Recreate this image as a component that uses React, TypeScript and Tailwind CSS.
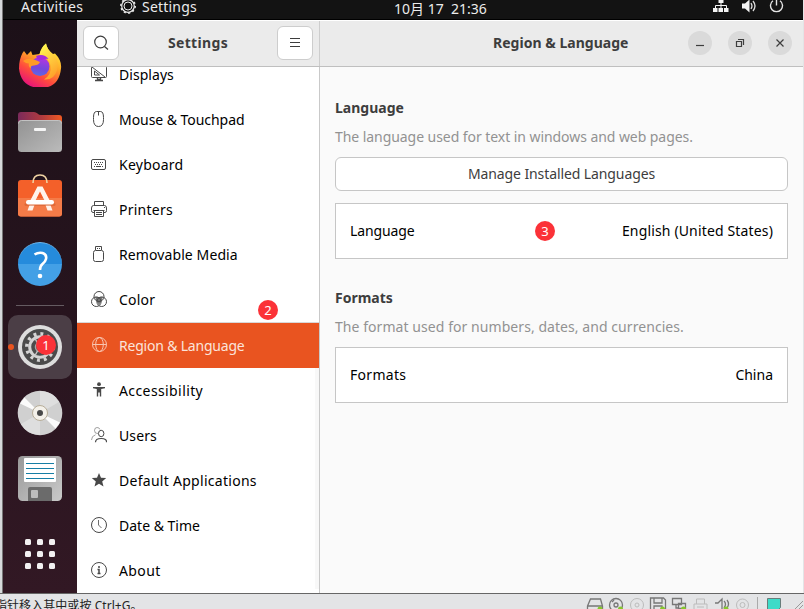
import React from 'react';

const line = { fill: 'none', stroke: 'currentColor', strokeWidth: 1 } as const;

function Icon({ children, size = 16, className = '' }: { children: React.ReactNode; size?: number; className?: string }) {
  return (
    <svg width={size} height={size} viewBox={`0 0 ${size} ${size}`} className={`shrink-0 ${className}`}>
      {children}
    </svg>
  );
}

const icons: Record<string, React.ReactNode> = {
  displays: (
    <g {...line}>
      <path d="M1.500.500h13q1 0 1 1v9q0 1-1 1h-13q-1 0-1-1v-9q0-1 1-1ZM1 1l13 10M3.500 5v4h5Z" />
      <path d="M6.500 12v1.500h3V12M4 14.500h8" strokeWidth="1.400" />
    </g>
  ),
  mouse: (
    <g {...line}>
      <path d="M5.500.500h4q3 0 3 6v2q0 7-5 7t-5-7v-2q0-6 3-6ZM7.500.500v4" />
    </g>
  ),
  keyboard: (
    <g {...line}>
      <rect x=".5" y="3.500" width="14" height="10" rx="1.500" />
      <path d="M3 6.500h10M4 8.500h8" strokeDasharray="1 1" />
      <path d="M3 10.500h1M5 10.500h5M11 10.500h1" />
    </g>
  ),
  printer: (
    <g {...line}>
      <path d="M3.500 4V.500h9V4M3 11.500H2q-1.500 0-1.500-2V7q0-2.500 2-2.500h11q2 0 2 2.500v2.500q0 2-1.500 2h-1M3.500 9v6.500h9V9M2.500 9.500h11M5 11.500h6M5 13.500h6M13 6.500h1" />
    </g>
  ),
  usb: (
    <g {...line}>
      <path d="M4.500 4V.500h6V4M6 2.500h1M8 2.500h1" />
      <rect x="2.500" y="4.500" width="10" height="11" rx="2" />
    </g>
  ),
  color: (
    <g {...line}>
      <path d="M4 6h8l-1.500 4L8 14 5.500 10Z" fill="currentColor" stroke="none" opacity=".75" />
      <circle cx="8" cy="5.500" r="5" />
      <circle cx="5.300" cy="10.700" r="4.800" />
      <circle cx="10.700" cy="10.700" r="4.800" />
    </g>
  ),
  globe: (
    <g {...line}>
      <circle cx="8.500" cy="7.500" r="7" />
      <ellipse cx="8.500" cy="7.500" rx="3.800" ry="7" />
      <path d="M1.500 7.500h14" />
    </g>
  ),
  access: (
    <g fill="currentColor">
      <circle cx="8" cy="2.200" r="1.900" />
      <path d="M2 5h12v1.200l-3.800.700v7.600H8.800v-4H7.200v4H5.800V6.900L2 6.200Z" />
    </g>
  ),
  users: (
    <g {...line}>
      <g opacity=".5">
        <path d="M7 6.500Q3.500 7 3.500 3.500 3.500.500 6 .500q2.500 0 3 2M.500 13q0-4 4-5.200" />
      </g>
      <ellipse cx="10.200" cy="6.500" rx="2.700" ry="3.200" />
      <path d="M4.500 15.200q0-3.700 5.700-3.700t5.300 3.700" strokeWidth="1.200" />
    </g>
  ),
  star: <path fill="currentColor" d="m8 1 2 4.800 5.200.3-4 3.300L12.500 14.500 8 11.700l-4.500 2.800 1.300-5.100-4-3.300L6 5.800Z" />,
  clock: (
    <g {...line}>
      <circle cx="8" cy="8" r="7.500" />
      <path d="M7.500 3v5l3 3" opacity=".8" />
    </g>
  ),
  about: (
    <g {...line}>
      <circle cx="8" cy="8" r="7.500" />
      <path d="M8 4v2M6.500 7.500H8V11M6.500 11.500h3" strokeWidth="1.500" />
    </g>
  ),
};

type Row = { icon: string; label: string; track: string };

const topRows: Row[] = [
  { icon: 'displays', label: 'Displays', track: 'tracking-[0.05px]' },
  { icon: 'mouse', label: 'Mouse & Touchpad', track: 'tracking-[-0.05px]' },
  { icon: 'keyboard', label: 'Keyboard', track: 'tracking-[0.25px]' },
  { icon: 'printer', label: 'Printers', track: 'tracking-[0.25px]' },
  { icon: 'usb', label: 'Removable Media', track: 'tracking-[0.1px]' },
  { icon: 'color', label: 'Color', track: 'tracking-[0.2px]' },
];

const bottomRows: Row[] = [
  { icon: 'access', label: 'Accessibility', track: 'tracking-[0.4px]' },
  { icon: 'users', label: 'Users', track: 'tracking-[0.1px]' },
  { icon: 'star', label: 'Default Applications', track: 'tracking-[0.28px]' },
  { icon: 'clock', label: 'Date & Time', track: 'tracking-[0px]' },
  { icon: 'about', label: 'About', track: 'tracking-[0.4px]' },
];

function SideRow({ row, active = false }: { row: Row; active?: boolean }) {
  return (
    <div className={`flex h-[45px] shrink-0 items-center pl-3.5 ${active ? 'bg-[#e95420] text-[#fbe3da]' : 'text-black'}`}>
      <Icon className={`mr-3 -mt-px ${active ? 'text-[#f8c4b0]' : 'text-[#484848]'}`}>{icons[row.icon]}</Icon>
      <span className={`whitespace-nowrap ${row.track}`}>{row.label}</span>
    </div>
  );
}

function Badge({ n, className }: { n: number; className: string }) {
  return (
    <div className={`absolute z-10 flex size-5 items-center justify-center rounded-full bg-[#fb3238] text-[13px] leading-5 text-white ${className}`}>
      {n}
    </div>
  );
}

function Firefox() {
  return (
    <svg width="44" height="44" viewBox="0 0 44 44" className="shrink-0">
      <defs>
        <linearGradient id="ffBody" x1=".8" y1=".1" x2=".3" y2="1">
          <stop offset="0" stopColor="#ffe93f" />
          <stop offset=".35" stopColor="#ffa726" />
          <stop offset=".68" stopColor="#ff4b3d" />
          <stop offset="1" stopColor="#e5127c" />
        </linearGradient>
        <linearGradient id="ffGlobe" x1=".6" y1="0" x2=".4" y2="1">
          <stop offset="0" stopColor="#b833e1" />
          <stop offset=".6" stopColor="#7448dc" />
          <stop offset="1" stopColor="#5b6ae6" />
        </linearGradient>
        <linearGradient id="ffFlame" x1=".4" y1="0" x2=".8" y2="1">
          <stop offset="0" stopColor="#fff44f" />
          <stop offset="1" stopColor="#ff9a27" />
        </linearGradient>
      </defs>
      <path d="M4.500 10 6 8l3 4 4-4 1.500 4 7-1q2-7 6.500-10.500 1 6 7 10.500l2-.5q7 7 6 15-2 19.500-20.500 19.500Q3 44.500 1 25.500q0-9 3.500-15.500Z" fill="url(#ffBody)" />
      <path d="M21.500 11.500Q23 4.500 28 .500q1 6 6 10 8 7 5 17-3 10-13 9 8-5 6.500-14-1.500-8-11-11Z" fill="url(#ffFlame)" />
      <circle cx="22" cy="23.500" r="9.500" fill="url(#ffGlobe)" />
      <path d="M5 18q4-3 9-2 4 1 8 3-1 3-6 3.500-4 0-3 3-3-2-2-5-3 0-6-2.500Z" fill="#ff9b25" />
      <path d="M18 13q8-3 12.500 3-3-.5-5 .5-2 1-6-.5Z" fill="#a52bdc" />
    </svg>
  );
}

function Files() {
  return (
    <svg width="44" height="44" viewBox="0 0 44 44" className="shrink-0">
      <defs>
        <linearGradient id="fdBack">
          <stop offset="0" stopColor="#7b2a5b" />
          <stop offset=".55" stopColor="#b23b3e" />
          <stop offset="1" stopColor="#f15a22" />
        </linearGradient>
        <linearGradient id="fdFront" x2="1" y2="1">
          <stop offset="0" stopColor="#929292" />
          <stop offset="1" stopColor="#bbb" />
        </linearGradient>
      </defs>
      <path d="M0 5q0-3 3-3h13q2 0 3.500 1.500T23 5h18q3 0 3 3v12H0Z" fill="url(#fdBack)" />
      <rect y="10" width="44" height="32" rx="3.500" fill="url(#fdFront)" />
      <path d="M.500 13.500q0-3 3-3h37q3 0 3 3" fill="none" stroke="#c2c2c2" />
      <rect x="16" y="18" width="12" height="3" rx="1" fill="#f5f5f5" />
    </svg>
  );
}

function Store() {
  return (
    <svg width="44" height="44" viewBox="0 0 44 44" className="shrink-0">
      <rect y="6" width="44" height="36.500" rx="3" fill="#f4602a" />
      <path d="M0 24h44v15.500q0 3-3 3H3q-3 0-3-3Z" fill="#f47b48" />
      <path d="M15 9q0-8 7-8t7 8" fill="none" stroke="#f0d3a3" strokeWidth="1.600" />
      <path d="M19.500 12.500h5L32.500 28h-5.200L22 17.500 16.700 28h-5.200Z" fill="#fff4ec" />
      <path d="M11.500 31h5l-2 5.500h-5ZM27.500 31h5l2 5.500h-5Z" fill="#fff0e8" />
      <path d="M8 30.500h28" stroke="#cf5a2b" strokeWidth="3" strokeLinecap="round" opacity=".5" />
      <rect x="8" y="26" width="28" height="4.500" rx="2.200" fill="#fff" />
    </svg>
  );
}

function Help() {
  return (
    <div className="mt-6 flex size-11 shrink-0 items-center justify-center rounded-full border-t border-[#6eb8ef] bg-linear-to-b from-[#258bdc] from-50% to-[#43a0e6] to-50%">
      <svg width="44" height="44" viewBox="0 0 44 44">
        <path d="M16.500 11.500q4-2.500 8-1.500 4.500 1.500 3.500 6-.5 2.500-3.500 5-2.500 2-2.500 6" fill="none" stroke="#fff" strokeWidth="2.600" />
        <circle cx="22" cy="33" r="2.300" fill="#fff" />
      </svg>
    </div>
  );
}

function Gear() {
  return (
    <svg width="46" height="46" viewBox="-23 -23 46 46" className="shrink-0">
      <circle r="22" fill="#ddd" />
      <circle r="18" fill="#4b4b4b" />
      <circle r="13.200" fill="none" stroke="#d4d4d4" strokeWidth="3.500" strokeDasharray="2.900 4.011" />
      <circle r="10.300" fill="none" stroke="#d4d4d4" strokeWidth="3" />
      <circle r="4.500" fill="none" stroke="#a5a5a5" strokeWidth="1.500" />
      <path d="M5 0H10M-2.500 4-5 8.500M-2.500-4-5-8.500" stroke="#c4c4c4" strokeWidth="1.500" />
    </svg>
  );
}

function Disc() {
  return (
    <svg width="46" height="46" viewBox="-23 -23 46 46" className="mt-[11px] shrink-0">
      <circle r="22.300" fill="#d0d0d0" />
      <path d="M0 0 0-22A22 22 0 0 1 19-11ZM0 0V22A22 22 0 0 1-19 11Z" fill="#dedede" />
      <path d="m0 0-20-9.500 4.500-6ZM0 0l20 9.500-4.500 6Z" fill="#fbfbfb" />
      <circle r="7.500" fill="#f4f1ea" stroke="#b7ad98" />
      <circle r="3" fill="#484848" />
    </svg>
  );
}

function Floppy() {
  return (
    <svg width="44" height="46" viewBox="0 0 44 46" className="mt-[20px] shrink-0">
      <defs>
        <linearGradient id="flBody" x2="1" y2="1">
          <stop offset="0" stopColor="#989898" />
          <stop offset="1" stopColor="#cacaca" />
        </linearGradient>
      </defs>
      <rect width="44" height="45" rx="4.500" fill="url(#flBody)" />
      <rect x="6" y="2" width="32" height="24" rx="1" fill="#fff" />
      <path d="M8 7.500h28M8 12.500h28M8 17.500h28M8 22.500h28" stroke="#167ea5" />
      <path d="M10 45V33q0-2 2-2h20q2 0 2 2v12Z" fill="#6b6b6b" />
      <rect x="13" y="34" width="7" height="8" rx="1" fill="#bdbdbd" />
    </svg>
  );
}

function Dock() {
  return (
    <div className="flex w-[74px] shrink-0 flex-col items-center bg-linear-to-b from-[#1c1018] to-[#321824] pt-[23px]">
      <Firefox />
      <div className="mt-[23px]"><Files /></div>
      <div className="mt-5"><Store /></div>
      <Help />
      <div className="mt-[19px] h-px w-12 shrink-0 bg-[#655b61]" />
      <div className="relative mt-[9px] flex size-16 shrink-0 items-center justify-center rounded-[10px] bg-[#4b3e46]">
        <div className="absolute top-[29px] left-0 size-1.5 rounded-full bg-[#e95420]" />
        <Gear />
        <Badge n={1} className="top-5 left-7" />
      </div>
      <Disc />
      <Floppy />
      <div className="mt-[37px] grid grid-cols-3 gap-1.5">
        {Array.from({ length: 9 }, (_, i) => (
          <div key={i} className="size-1.5 rounded-[1.5px] bg-[#f2f0f1]" />
        ))}
      </div>
    </div>
  );
}

function TopBar() {
  return (
    <div className="flex h-5 shrink-0 border-b border-black bg-[#131313] text-[14px] leading-[14px] text-[#ececec]">
      <span className="ml-[18px] w-[99px] tracking-[0.4px]">Activities</span>
      <svg width="16" height="16" viewBox="-8 -8 16 16" className="-mt-[2px] shrink-0">
        <circle r="6.300" fill="none" stroke="#ececec" strokeWidth="1.200" />
        <circle r="7.200" fill="none" stroke="#ececec" strokeWidth="1.500" strokeDasharray="2 2.524" />
        <circle r="4" fill="none" stroke="#ececec" />
      </svg>
      <span className="ml-1.5 w-[252px] tracking-[0.2px]">Settings</span>
      <span className="mt-0.5 w-[319px] whitespace-pre">10月 17  21:36</span>
      <svg width="72" height="14" viewBox="0 0 72 14" className="shrink-0">
        <g fill="#f4f4f4">
          <path d="M5.500 0h5v3h-5zM0 8h4.500v4H0zM5.500 8H10v4H5.500zM11 8h4.500v4H11z" />
          <path d="M2.500 8V5.500h11V8M8 2v6" fill="none" stroke="#f4f4f4" />
          <path d="M29 3.500h3l4.500-4v13l-4.500-4h-3Z" />
        </g>
        <path d="M38 3q2 3 0 6M40 1q4 5 0 10" fill="none" stroke="#ddd" strokeWidth="1.300" />
        <path d="M60 .800a6 6 0 1 0 7 0M63.500-1v6.500" fill="none" stroke="#e4e4e4" strokeWidth="1.400" />
      </svg>
    </div>
  );
}

function Header() {
  return (
    <>
      <div className="flex h-[46px] items-center border-t border-white bg-[#ebebeb]">
        <div className="flex h-full w-[242px] shrink-0 items-center justify-between px-1.5 pb-px">
          <div className="flex h-[34px] w-9 items-center justify-center rounded-md border border-[#cdcdcd] bg-white text-[#3d3d3d]">
            <Icon><g {...line} strokeWidth="1.200"><circle cx="7.500" cy="7" r="5.800" /><path d="m11.500 11.500 3.500 3" /></g></Icon>
          </div>
          <span className="-mt-px text-[14px] font-bold tracking-[0.35px] text-[#3d3d3d]">Settings</span>
          <div className="flex h-[34px] w-9 items-center justify-center rounded-md border border-[#cdcdcd] bg-white text-[#3d3d3d]">
            <Icon><path {...line} d="M3 3.500h10M3 7.500h10M3 11.500h10" /></Icon>
          </div>
        </div>
        <div className="h-full w-px bg-[#cdcdcd]" />
        <div className="flex flex-1 items-center pb-px">
          <span className="-mt-px ml-[173px] w-[195px] whitespace-nowrap text-[14px] font-bold tracking-[0.02px] text-[#3d3d3d]">Region &amp; Language</span>
          <div className="flex gap-4 text-[#3d3d3d]">
            {['M4 10.500h8', 'M4.500 6.500h5v5h-5ZM6 4.500h5.500V10', 'm4.500 4.500 7 7m0-7-7 7'].map((d) => (
              <div key={d} className="flex size-6 items-center justify-center rounded-full bg-[#dadada]">
                <Icon><path {...line} strokeWidth="1.200" d={d} /></Icon>
              </div>
            ))}
          </div>
        </div>
      </div>
      <div className="h-px shrink-0 bg-[#bfbfbf]" />
    </>
  );
}

function StatusBar() {
  return (
    <div className="flex h-4 shrink-0 justify-between overflow-hidden border-t border-[#666] bg-[#e3e4e6]">
      <span className="-ml-[5px] mt-1 whitespace-nowrap text-[12px] leading-4 tracking-[0.06px] text-[#222]">指针移入其中或按 Ctrl+G。</span>
      <svg width="218" height="15" viewBox="586 594 218 15">
        <g fill="none" stroke="#777" strokeWidth="1.300">
          <path d="m587.500 606 3-7h10l2 7v4h-15ZM587.500 606h15" />
          <circle cx="616" cy="605" r="6.500" />
          <circle cx="616" cy="605" r="2" />
          <path d="M612 602l2-2" />
          <path d="M650.500 598h13l2 2v10h-15ZM654 598v5h8v-5M654 610v-4h8v4" />
          <path d="M672.500 598.500h9v6h-9ZM678.500 603.500h7v5h-7ZM676 605v3h2.500" />
          <path d="M715 603h3l4-4v11M724 601q3 3 0 7M727 600q3 4 0 8" />
        </g>
        <g fill="none" stroke="#bcbcbc">
          <circle cx="637" cy="605" r="6.500" /><circle cx="637" cy="605" r="2" />
          <path d="M696.500 604v-5h8v5M694 610v-6h13v6M697 607h7" />
          <circle cx="742.500" cy="605" r="6" /><circle cx="742.500" cy="605" r="2.500" />
        </g>
        <g fill="#86c72c">
          <circle cx="600" cy="609" r="2.500" /><circle cx="620.500" cy="609" r="2.500" /><circle cx="662.500" cy="609" r="2.500" /><circle cx="683.500" cy="609" r="2.500" /><circle cx="726" cy="609" r="2.500" />
        </g>
        <path d="M757.500 597v12" stroke="#aaa" />
        <path d="M767.500 598.500h13v9l-3 3h-10Z" fill="#3ddbc8" stroke="#687d7b" />
        <path d="m795 609 8-8M799 609l4-4" stroke="#999" />
      </svg>
    </div>
  );
}

export default function App() {
  return (
    <div className="flex h-[609px] w-[804px] flex-col overflow-hidden bg-[#e3e4e6] font-['Noto_Sans','Noto_Sans_CJK_SC',sans-serif] text-[14px]">
      <div className="flex h-[593px] shrink-0">
        <div className="w-[3px] shrink-0 border-r border-[#777] bg-[#d6d9db]" />
        <div className="flex w-[800px] shrink-0 flex-col">
          <TopBar />
          <div className="flex min-h-0 flex-1">
            <Dock />
            <div className="flex min-w-0 flex-1 flex-col">
              <Header />
              <div className="flex min-h-0 flex-1">
                <nav className="relative w-[242px] shrink-0 bg-white">
                  <div className="h-full overflow-hidden">
                    <div className="-mt-[15px] flex flex-col">
                      {topRows.map((row) => <SideRow key={row.label} row={row} />)}
                      <div className="h-px bg-[#d8d8d8]" />
                      <SideRow active row={{ icon: 'globe', label: 'Region & Language', track: 'tracking-[-0.2px]' }} />
                      {bottomRows.map((row) => <SideRow key={row.label} row={row} />)}
                    </div>
                  </div>
                  <div className="absolute top-[301px] right-0 bottom-1 w-1 bg-[#f8f8f8]" />
                  <Badge n={2} className="top-[233px] left-[181px]" />
                </nav>
                <main className="flex flex-1 flex-col border-l border-[#c9c9c9] bg-[#fafafa] px-[15px] pt-[31px]">
                  <h2 className="text-[14px] leading-5 font-bold text-[#3d3d3d]">Language</h2>
                  <p className="mt-[9px] leading-5 tracking-[-0.06px] text-[#929292]">The language used for text in windows and web pages.</p>
                  <div className="mt-2.5 flex h-[34px] items-center justify-center rounded-md border border-[#c6c6c6] bg-white pb-0.5 tracking-[-0.1px] text-[#3d3d3d]">Manage Installed Languages</div>
                  <div className="relative mt-3 flex h-14 items-center justify-between border border-[#c6c6c6] bg-white px-3.5 pb-0.5 text-black">
                    <span className="tracking-[-0.1px]">Language</span>
                    <span className="tracking-[0.15px]">English (United States)</span>
                    <Badge n={3} className="top-[17px] left-[199px]" />
                  </div>
                  <h2 className="mt-[29px] text-[14px] leading-5 font-bold text-[#3d3d3d]">Formats</h2>
                  <p className="mt-[9px] leading-5 tracking-[0.06px] text-[#929292]">The format used for numbers, dates, and currencies.</p>
                  <div className="mt-2.5 flex h-14 items-center justify-between border border-[#c6c6c6] bg-white px-3.5 pb-0.5 text-black">
                    <span className="tracking-[0.3px]">Formats</span>
                    <span>China</span>
                  </div>
                </main>
              </div>
            </div>
          </div>
        </div>
      </div>
      <StatusBar />
    </div>
  );
}
